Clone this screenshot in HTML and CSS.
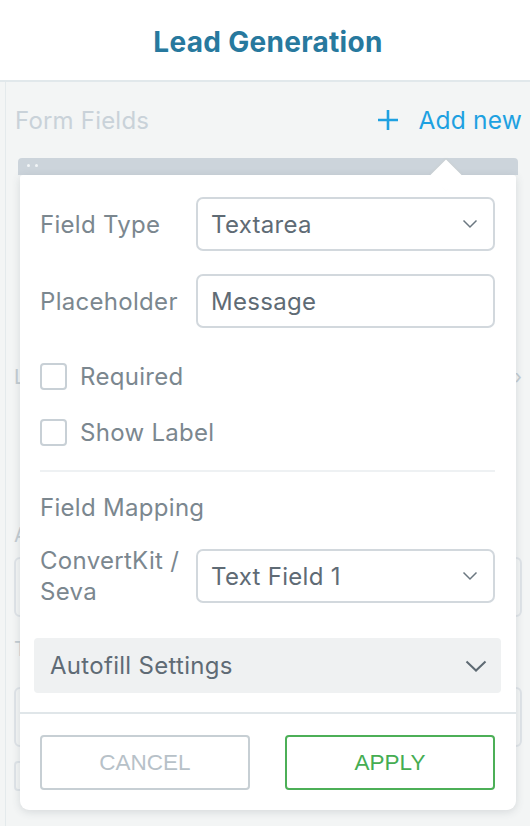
FILE: index.html
```html
<!DOCTYPE html>
<html lang="en">
<head>
    <meta charset="UTF-8">
    <meta name="viewport" content="width=device-width, initial-scale=1.0">
    <title>Lead Generation</title>
    <link rel="stylesheet" href="styles.css">
</head>
<body>
    <div class="header">
        <h1 class="title">Lead Generation</h1>
    </div>

    <div class="panel">
        <div class="panel-head">
            <span class="panel-title">Form Fields</span>
            <a class="add-new" href="#">
                <svg width="22" height="22" viewBox="0 0 22 22"><path d="M11 1v20M1 11h20" stroke="#1ea1e1" stroke-width="2.6" fill="none"/></svg>
                <span>Add new</span>
            </a>
        </div>

        <div class="field-card">
            <div class="card-bar"><i></i><i></i></div>
            <div class="card-body">
                <div class="bg-row">
                    <span class="bg-label">Label</span>
                    <span class="bg-chevron">&rsaquo;</span>
                </div>
                <div class="bg-label bg-title">Auto</div>
                <div class="bg-input"></div>
                <div class="bg-label bg-title second">Type</div>
                <div class="bg-input"></div>
                <div class="bg-check"></div>
            </div>

            <!-- field settings popover -->
            <div class="popover">
                <div class="popover-body">
                    <div class="row">
                        <label class="label">Field Type</label>
                        <div class="select">
                            <span>Textarea</span>
                            <svg class="chev" width="16" height="10" viewBox="0 0 16 10"><path d="M1.5 1.5l6.5 6.5 6.5-6.5" stroke="#6b7780" stroke-width="1.5" fill="none"/></svg>
                        </div>
                    </div>
                    <div class="row">
                        <label class="label">Placeholder</label>
                        <div class="select"><span>Message</span></div>
                    </div>

                    <div class="checks">
                        <label class="check"><span class="box"></span>Required</label>
                        <label class="check"><span class="box"></span>Show Label</label>
                    </div>

                    <div class="divider"></div>

                    <div class="section-title">Field Mapping</div>
                    <div class="row">
                        <label class="label two-line">ConvertKit /<br>Seva</label>
                        <div class="select">
                            <span>Text Field 1</span>
                            <svg class="chev" width="16" height="10" viewBox="0 0 16 10"><path d="M1.5 1.5l6.5 6.5 6.5-6.5" stroke="#6b7780" stroke-width="1.5" fill="none"/></svg>
                        </div>
                    </div>
                </div>

                <div class="accordion">
                    <span>Autofill Settings</span>
                    <svg width="22" height="12" viewBox="0 0 22 12"><path d="M1.5 1.5l9.5 9 9.5-9" stroke="#5e6a73" stroke-width="2" fill="none"/></svg>
                </div>

                <div class="actions">
                    <button class="btn cancel">CANCEL</button>
                    <button class="btn apply">APPLY</button>
                </div>
            </div>
        </div>
    </div>
</body>
</html>
```

FILE: styles.css
```css
body {
    margin: 0;
    width: 530px;
    height: 826px;
    overflow: hidden;
    font-family: Inter, "Noto Sans", sans-serif;
    background: #f3f5f5;
}

.header {
    height: 80px;
    background: #fff;
    border-bottom: 2px solid #e1e8eb;
    display: flex;
    align-items: center;
    justify-content: center;
}

.title {
    margin: 0;
    font-size: 28px;
    font-weight: 700;
    color: #27799e;
    letter-spacing: 0.3px;
    padding: 4px 0 0 6px;
}

.panel {
    height: 744px;
    margin-left: 5px;
    border-left: 1px solid #e4eaec;
    background: #f3f5f5;
    padding: 0 9px 0 9px;
    position: relative;
}

.panel-head {
    display: flex;
    justify-content: space-between;
    align-items: center;
    height: 76px;
}

.panel-title {
    font-size: 24px;
    color: #c9d2d9;
    letter-spacing: 0.2px;
}

.add-new {
    display: flex;
    align-items: center;
    gap: 19px;
    text-decoration: none;
    color: #1ea1e1;
    font-size: 24.5px;
    letter-spacing: 0.2px;
    margin-right: -1px;
}

.field-card {
    position: relative;
    margin-left: 3px;
    width: 500px;
}

.card-bar {
    height: 17px;
    background: #ccd4db;
    border-radius: 4px 4px 0 0;
    display: flex;
    gap: 5px;
    padding: 6px 0 0 9px;
    box-sizing: border-box;
}

.card-bar i {
    width: 3px;
    height: 3px;
    border-radius: 50%;
    background: #f2f5f7;
}

/* card contents sitting under the popover */
.card-body {
    padding: 190px 0 0 0;
    margin-left: -4px;
    width: 508px;
}

.bg-row {
    display: flex;
    justify-content: space-between;
    color: #c3ccd2;
    font-size: 20px;
    line-height: 24px;
    height: 158px;
}

.bg-label {
    color: #c3ccd2;
    font-size: 20px;
    line-height: 24px;
}

.bg-title {
    height: 34px;
}

.bg-title.second {
    height: 50px;
}

.bg-input {
    height: 56px;
    border: 2px solid #dfe4e8;
    border-radius: 6px;
    margin-bottom: 20px;
}

.bg-check {
    width: 26px;
    height: 26px;
    margin-top: -6px;
    border: 2px solid #dfe4e8;
    border-radius: 4px;
}

.popover {
    position: absolute;
    top: 17px;
    left: 2px;
    width: 496px;
    height: 635px;
    background: #fff;
    border-radius: 3px 3px 9px 9px;
    box-shadow: 0 2px 9px rgba(60, 75, 85, 0.16);
    box-sizing: border-box;
    letter-spacing: 0.3px;
}

.popover::before {
    content: "";
    position: absolute;
    top: -11px;
    left: 415px;
    width: 22px;
    height: 22px;
    background: #fff;
    transform: rotate(45deg);
    box-shadow: -1px -1px 1px rgba(200, 205, 205, 0.5);
}

.popover-body {
    position: relative;
    padding: 22px 21px 0 20px;
}

.row {
    display: flex;
    align-items: center;
    justify-content: space-between;
    margin-bottom: 23px;
}

.label {
    font-size: 24px;
    color: #7b878f;
}

.two-line {
    line-height: 31px;
}

.select {
    width: 299px;
    height: 54px;
    box-sizing: border-box;
    border: 2px solid #d2d8dd;
    border-radius: 7px;
    display: flex;
    align-items: center;
    justify-content: space-between;
    padding: 0 15px 0 13px;
    font-size: 24px;
    color: #5f6b75;
}

.checks {
    display: flex;
    flex-direction: column;
    gap: 27px;
    padding-top: 11px;
}

.check {
    display: flex;
    align-items: center;
    gap: 13px;
    font-size: 24px;
    color: #7b878f;
}

.box {
    width: 27px;
    height: 27px;
    box-sizing: border-box;
    border: 2px solid #c8d0d6;
    border-radius: 4px;
}

.divider {
    height: 2px;
    background: #eef1f3;
    margin: 23px 0 21px;
}

.section-title {
    font-size: 24px;
    color: #7b878f;
    margin-bottom: 23px;
}

.accordion {
    margin: 31px 15px 0 14px;
    height: 55px;
    background: #eff1f2;
    border-radius: 4px;
    display: flex;
    align-items: center;
    justify-content: space-between;
    padding: 0 14px 0 16px;
    font-size: 24px;
    color: #5f6b75;
}

.actions {
    margin-top: 19px;
    border-top: 2px solid #e0e6e9;
    padding: 21px 21px 0 20px;
    display: flex;
    justify-content: space-between;
}

.btn {
    width: 210px;
    height: 55px;
    background: #fff;
    border-radius: 4px;
    font-family: "Liberation Sans", Arial, sans-serif;
    font-size: 22.5px;
    cursor: pointer;
}

.btn.cancel {
    border: 2px solid #c7cfd4;
    color: #b7c1c8;
}

.btn.apply {
    border: 2px solid #4caf57;
    color: #45ad52;
}
```
